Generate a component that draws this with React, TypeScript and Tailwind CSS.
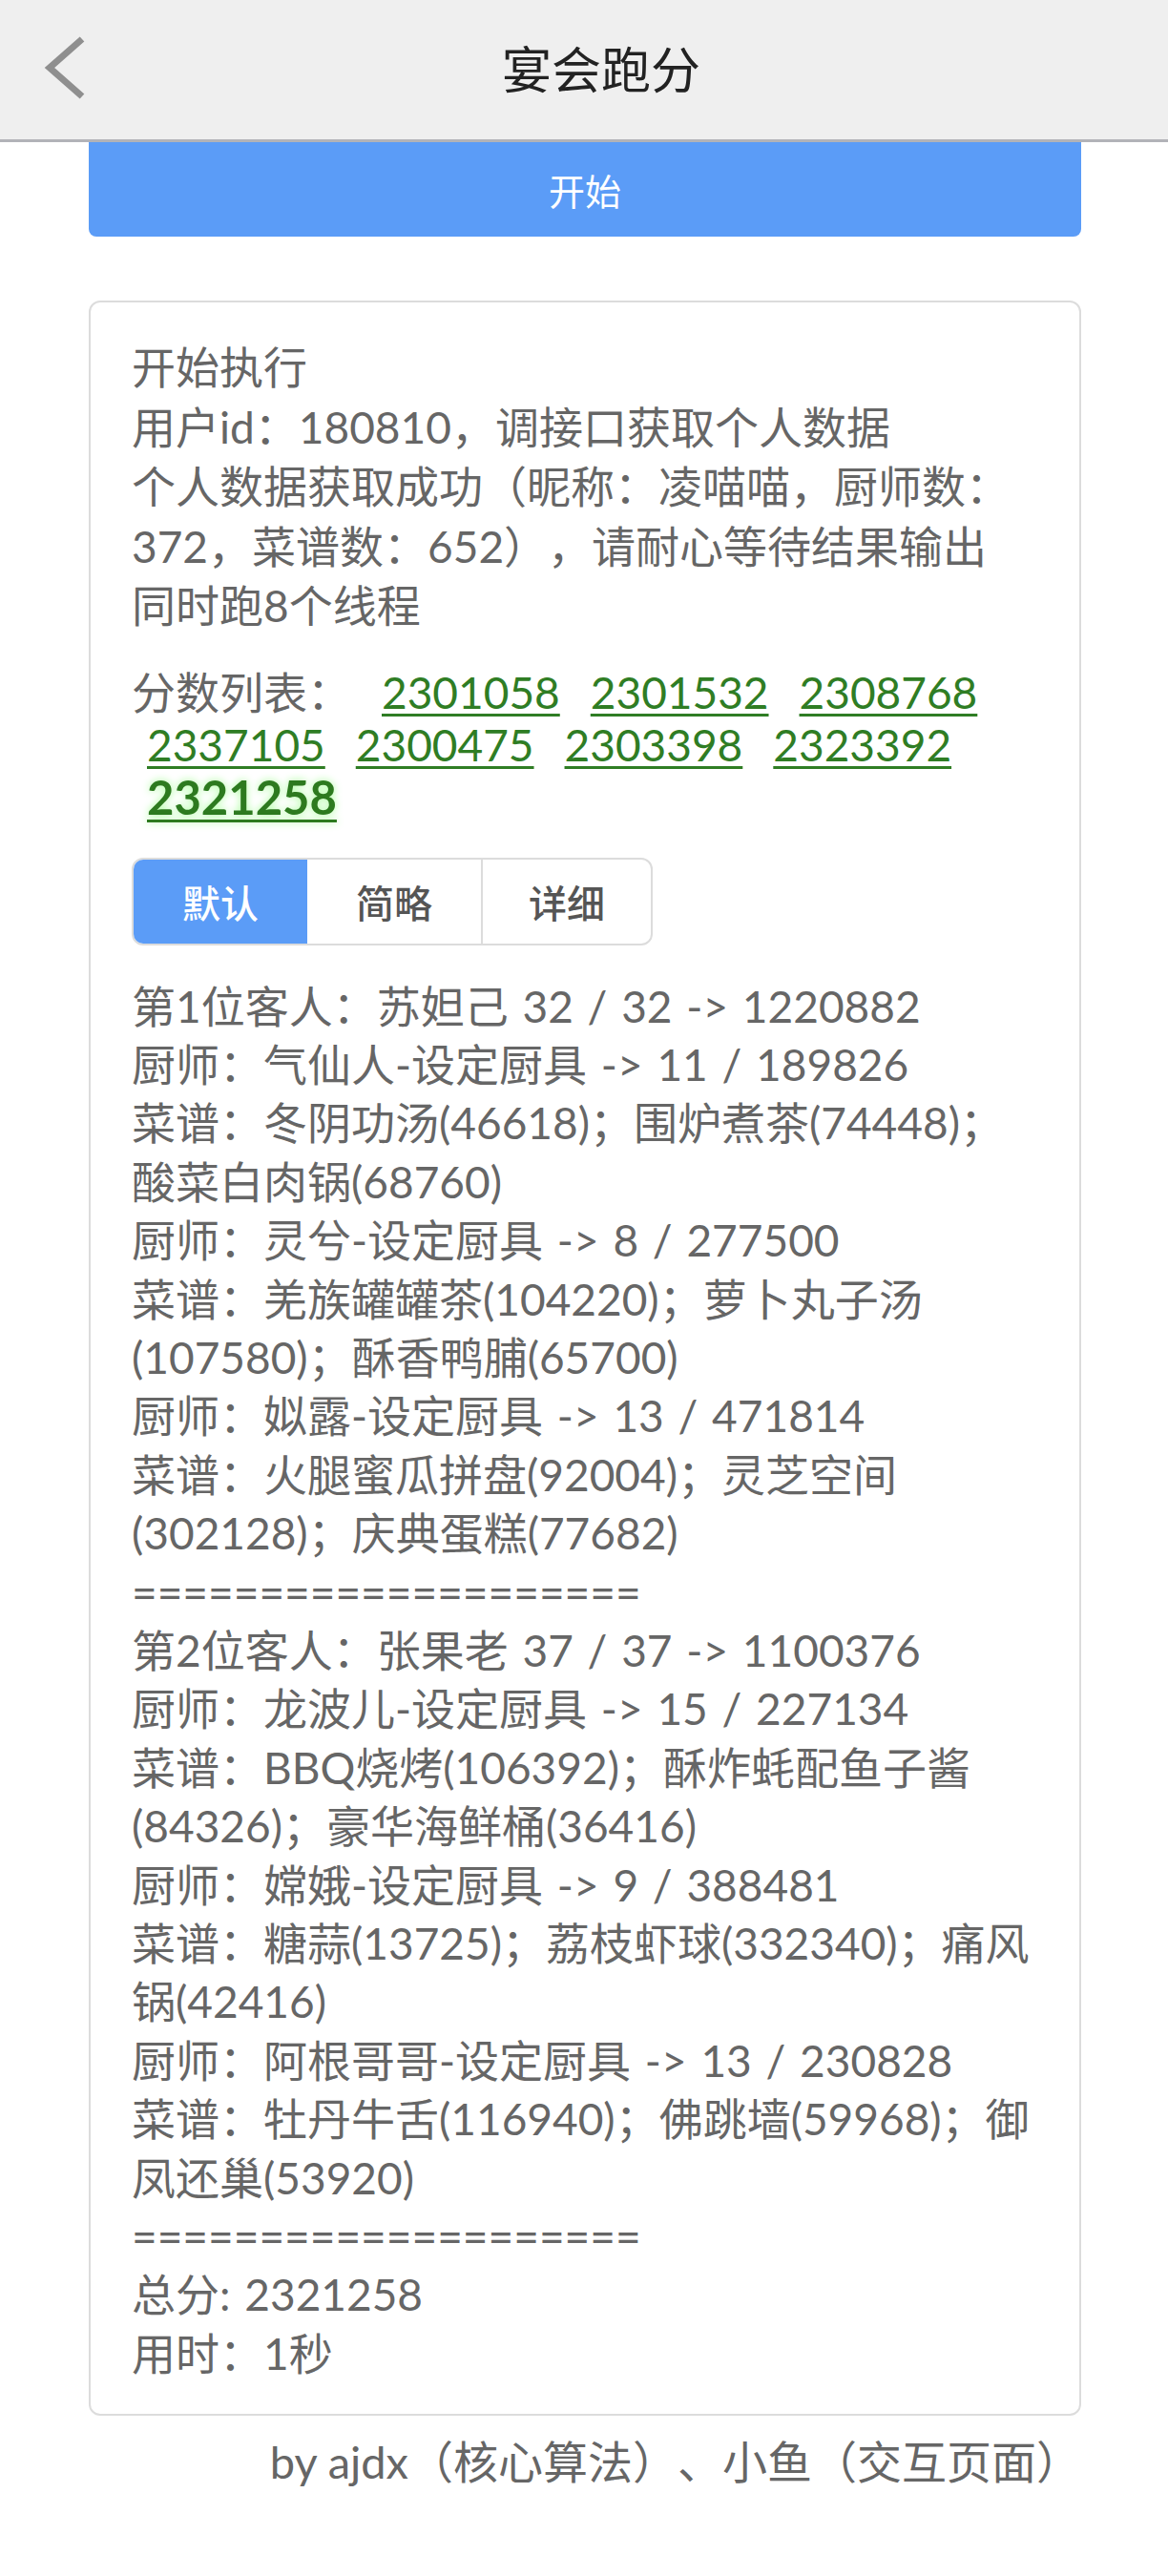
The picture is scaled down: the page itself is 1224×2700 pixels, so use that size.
import React from "react";

const scores = ["2301058", "2301532", "2308768", "2337105", "2300475", "2303398", "2323392"];

const logLines = [
  "开始执行",
  "用户id：180810，调接口获取个人数据",
  "个人数据获取成功（昵称：凌喵喵，厨师数：372，菜谱数：652），请耐心等待结果输出",
  "同时跑8个线程",
];

const sep = "====================";

const detailLines = [
  "第1位客人：苏妲己 32 / 32 -> 1220882",
  "厨师：气仙人-设定厨具 -> 11 / 189826",
  "菜谱：冬阴功汤(46618)；围炉煮茶(74448)；酸菜白肉锅(68760)",
  "厨师：灵兮-设定厨具 -> 8 / 277500",
  "菜谱：羌族罐罐茶(104220)；萝卜丸子汤(107580)；酥香鸭脯(65700)",
  "厨师：姒露-设定厨具 -> 13 / 471814",
  "菜谱：火腿蜜瓜拼盘(92004)；灵芝空间(302128)；庆典蛋糕(77682)",
  sep,
  "第2位客人：张果老 37 / 37 -> 1100376",
  "厨师：龙波儿-设定厨具 -> 15 / 227134",
  "菜谱：BBQ烧烤(106392)；酥炸蚝配鱼子酱(84326)；豪华海鲜桶(36416)",
  "厨师：嫦娥-设定厨具 -> 9 / 388481",
  "菜谱：糖蒜(13725)；荔枝虾球(332340)；痛风锅(42416)",
  "厨师：阿根哥哥-设定厨具 -> 13 / 230828",
  "菜谱：牡丹牛舌(116940)；佛跳墙(59968)；御凤还巢(53920)",
  sep,
  "总分: 2321258",
  "用时：1秒",
];

export default function App() {
  return (
    <div className="min-h-[2700px] w-full bg-white font-[Lato,'Noto_Sans_CJK_SC',sans-serif] text-[#666] [text-spacing-trim:space-all]">
      {/* Header */}
      <div className="grid h-[149px] grid-cols-[1fr_auto_1fr] items-center border-b-[3px] border-[#b2b3b8] bg-[#efefef]">
        <div className="flex items-center">
          <svg width="60" height="80" viewBox="0 0 60 80" className="mb-[4px] ml-[40px]">
            <path d="M46 10 L12 40 L46 70" fill="none" stroke="#8f8f8f" strokeWidth="7" strokeLinejoin="miter" />
          </svg>
        </div>
        <div className="mb-[4px] ml-[36px] font-['Noto_Sans_CJK_SC',sans-serif] text-[52px] leading-none text-[#222]">
          宴会跑分
        </div>
        <div />
      </div>

      <div className="pl-[93px] pr-[91px]">
        {/* Start button */}
        <div className="flex h-[99px] items-center justify-center rounded-b-[8px] bg-[#5b9cf7] font-['Noto_Sans_CJK_SC',sans-serif] text-[38px] text-white">
          开始
        </div>

        {/* Card */}
        <div className="mt-[67px] rounded-[12px] border-2 border-[#dcdcdc] pb-[33px] pl-[43px] pr-[35px] pt-[37px] [word-spacing:3px]">
          <div className="text-[46px] leading-[62.5px]">
            {logLines.map((l, i) => (
              <div key={i}>{l}</div>
            ))}
          </div>

          {/* Score list */}
          <div className="mt-[31px] flex flex-wrap items-baseline text-[46px] leading-[55px]">
            <span className="pr-[16px]">分数列表：</span>
            {scores.map((s) => (
              <span
                key={s}
                className="mx-[16px] text-[#2f7d24] underline decoration-[3px] underline-offset-[5px]"
              >
                {s}
              </span>
            ))}
            <span className="mx-[16px] text-[49px] font-bold text-[#2d7a1f] underline decoration-[3px] underline-offset-[5px] [text-shadow:0_0_8px_#a8ff9a]">
              2321258
            </span>
          </div>

          {/* Tabs */}
          <div className="mt-[36px] flex h-[92px] w-[546px] overflow-hidden rounded-[12px] border-2 border-[#dcdcdc] font-['Noto_Sans_CJK_SC',sans-serif] text-[40px]">
            <div className="flex w-[182px] items-center justify-center bg-[#5b9cf7] font-medium text-white">默认</div>
            <div className="flex w-[182px] items-center justify-center font-medium text-[#555]">简略</div>
            <div className="flex flex-1 items-center justify-center border-l-2 border-[#dcdcdc] font-medium text-[#555]">
              详细
            </div>
          </div>

          {/* Details */}
          <div className="mt-[33px] text-[46px] leading-[61.4px]">
            {detailLines.map((l, i) => (
              <div key={i}>{l}</div>
            ))}
          </div>
        </div>

        {/* Footer */}
        <div className="mt-[17px] text-right text-[47px] leading-[62px] text-[#666]">
          by ajdx（核心算法）、小鱼（交互页面）
        </div>
      </div>
    </div>
  );
}
